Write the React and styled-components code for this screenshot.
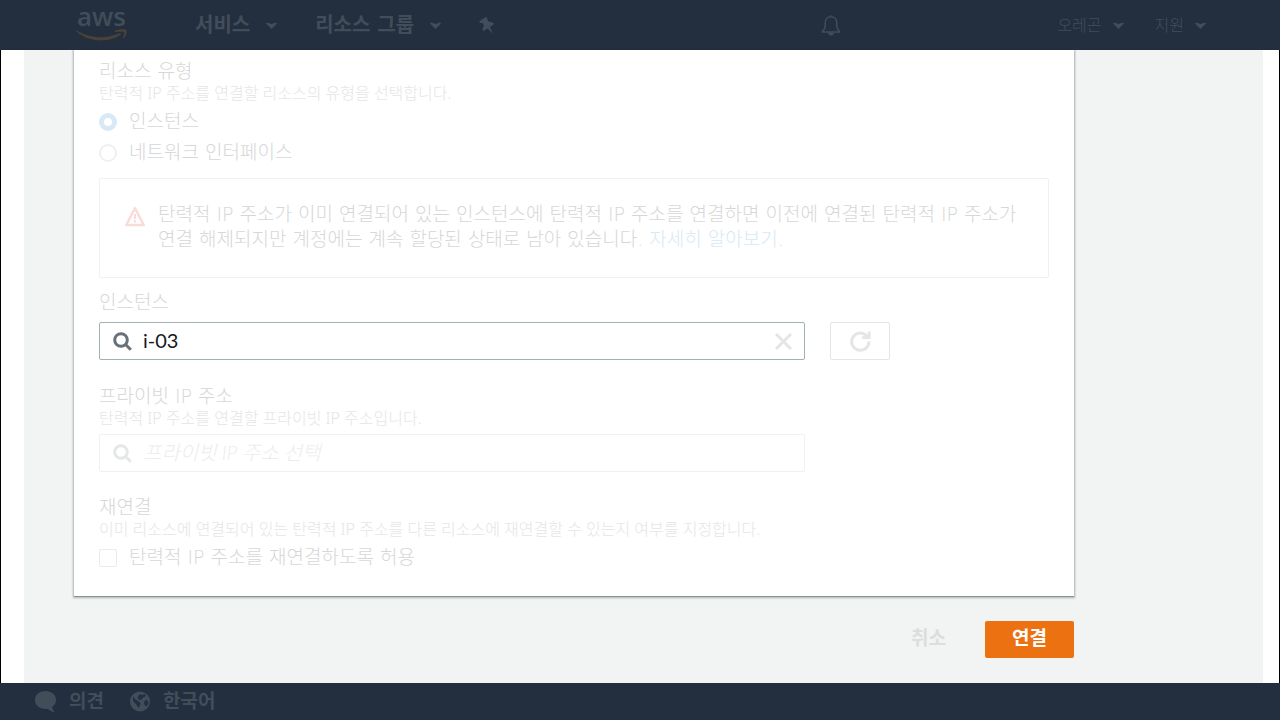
import React, { useState } from 'react';
import styled, { createGlobalStyle, ThemeProvider } from 'styled-components';

const theme = {
  color_nav: '#232f3e',
  color_nav_text: '#424d5a',
  color_page: '#f2f3f3',
  color_text: '#d6d7d8',
  color_hint: '#e4e6e6',
  color_border: '#eff0f0',
  color_link: '#d6e9f4',
  color_warning: '#f9dcd8',
  color_primary: '#ec7211',
  font_body: '"DejaVu Sans", "Noto Sans CJK KR", sans-serif',
  font_input: 'Lato, "Noto Sans CJK KR", sans-serif',
  font_hint: '"Noto Sans", "Noto Sans CJK KR", sans-serif',
};

const GlobalStyle = createGlobalStyle`
  *, *::before, *::after {
    box-sizing: border-box;
  }

  body {
    margin: 0;
    background-color: #ffffff;
    font-family: ${props => props.theme.font_body};
    font-size: 19px;
    font-weight: 300;
    line-height: 25px;
    color: ${props => props.theme.color_text};
  }

  button, input {
    margin: 0;
    font: inherit;
    color: inherit;
  }

  svg {
    display: block;
    flex: none;
  }
`;

const Page = styled.div`
  min-height: 100vh;
  display: flex;
  flex-direction: column;
`;

/* header */

const Header = styled.header`
  height: 50px;
  padding: 0 74px 0 76px;
  display: flex;
  align-items: center;
  background-color: ${props => props.theme.color_nav};
  color: ${props => props.theme.color_nav_text};
`;

const Logo = styled.a`
  width: 51px;
  margin-right: 68px;
  padding-bottom: 6px;
  display: flex;
  flex-direction: column;
  align-items: center;
  color: inherit;
  text-decoration: none;
`;

const LogoName = styled.span`
  font-family: "Open Sans", sans-serif;
  font-size: 26px;
  font-weight: 600;
  line-height: 26px;
`;

const Nav = styled.nav`
  flex: 1;
  display: flex;
  align-items: center;
  gap: 38px;
`;

const NavRight = styled(Nav)`
  flex: none;
  gap: 31px;
`;

const MenuButton = styled.button`
  padding: 0;
  border: 0;
  background: none;
  display: flex;
  align-items: center;
  gap: ${props => (props.$small ? 11 : 16)}px;
  font-size: ${props => (props.$small ? 16 : 20)}px;
  font-weight: ${props => (props.$small ? 300 : 700)};
`;

const IconButton = styled.button`
  padding: 0;
  border: 0;
  background: none;
  display: flex;
`;

const BellButton = styled(IconButton)`
  margin-right: 185px;
`;

/* form */

const Body = styled.div`
  flex: 1;
  padding: 0 16px 0 23px;
  display: flex;
  border: solid #000000;
  border-width: 0 1px;
`;

const Main = styled.main`
  flex: 1;
  padding: 0 50px 25px;
  background-color: ${props => props.theme.color_page};
`;

const Form = styled.form`
  max-width: 1000px;
`;

const Card = styled.div`
  padding: 9px 25px 26px;
  background-color: #ffffff;
  box-shadow: 0 1px 0 #879596, 0 1px 2px 1px rgba(0, 28, 36, 0.3);
  clip-path: inset(0 -4px -4px -4px);
`;

const Field = styled.div`
  margin-bottom: ${props => props.$space || 0}px;
`;

const Label = styled.label`
  display: block;
  line-height: 24px;
`;

const Hint = styled.p`
  margin: 0;
  font-family: ${props => props.theme.font_hint};
  font-size: 16px;
  line-height: 20px;
  color: ${props => props.theme.color_hint};
`;

const Choice = styled.label`
  margin-top: 6px;
  display: flex;
  align-items: center;
  gap: 12px;
`;

const Radio = styled.input`
  appearance: none;
  width: 18px;
  height: 18px;
  border: 2px solid ${props => props.theme.color_border};
  border-radius: 50%;
  background-color: #ffffff;

  &:checked {
    border: 5px solid ${props => props.theme.color_link};
  }
`;

const Checkbox = styled.input`
  appearance: none;
  width: 18px;
  height: 18px;
  border: 1px solid #e9eaea;
  border-radius: 2px;
  background-color: #ffffff;
`;

const Alert = styled.div`
  margin: 13px 0 12px;
  padding: 23px 25px 25px;
  display: flex;
  gap: 13px;
  border: 1px solid ${props => props.theme.color_border};
  border-radius: 2px;

  & > svg {
    margin-top: 4px;
  }
`;

const AlertText = styled.p`
  margin: 0;
`;

const Link = styled.a`
  color: ${props => props.theme.color_link};
  text-decoration: none;
`;

const SearchRow = styled.div`
  margin-top: ${props => props.$top}px;
  display: flex;
  gap: 25px;
`;

const SearchBox = styled.div`
  flex: 0 1 706px;
  height: 38px;
  padding: 0 12px 0 13px;
  display: flex;
  align-items: center;
  gap: 11px;
  border: 1px solid ${props => (props.$active ? '#a2b2b3' : props.theme.color_border)};
  border-radius: 2px;
  background-color: #ffffff;
  color: ${props => (props.$active ? '#687078' : '#e4e6e7')};
`;

const SearchInput = styled.input`
  flex: 1;
  min-width: 0;
  padding: 0 0 2px;
  border: 0;
  outline: 0;
  background: none;
  color: #16191f;
  font-family: ${props => props.theme.font_input};
  font-size: 20px;
  font-weight: 400;

  &::placeholder {
    color: #eceded;
    font-style: italic;
    font-weight: 300;
    opacity: 1;
  }
`;

const ClearButton = styled(IconButton)`
  color: #e4e5e6;
`;

const RefreshButton = styled.button`
  width: 60px;
  padding: 0;
  display: flex;
  align-items: center;
  justify-content: center;
  border: 1px solid #e4e5e6;
  border-radius: 2px;
  background-color: #ffffff;
  color: #e4e5e6;
`;

const Actions = styled.div`
  margin-top: 25px;
  display: flex;
  justify-content: flex-end;
  gap: 12px;
`;

const ActionButton = styled.button`
  height: 37px;
  padding: 0 27px 3px;
  border: 0;
  border-radius: 2px;
  background-color: ${props => (props.$primary ? props.theme.color_primary : 'transparent')};
  color: ${props => (props.$primary ? '#ffffff' : '#dcdddd')};
  font-weight: 700;
`;

/* footer */

const Footer = styled.footer`
  height: 37px;
  padding: 0 35px;
  display: flex;
  align-items: center;
  gap: 26px;
  background-color: ${props => props.theme.color_nav};
  color: ${props => props.theme.color_nav_text};
`;

const FooterButton = styled.button`
  padding: 0;
  border: 0;
  background: none;
  display: flex;
  align-items: center;
  gap: 13px;
  font-weight: 700;
`;

/* icons */

const IconSmile = () => (
  <svg width="51" height="12" viewBox="0 0 51 12" fill="#4a4238">
    <path d="M.4 1.2C8 5.900 16 8.200 25 8.200c7 0 13-1.500 18.500-3.900 1.200-.5 2 .7 1 1.500C39.500 9.500 32 11.500 25 11.500 15.500 11.500 6.500 8 .2 2c-.5-.5-.3-1.100.2-.8z" />
    <path d="M39 1.800C42 .2 48.500-.3 50.200.8c1 .8.300 6.200-2.700 8.700-.5.4-.9.2-.7-.3.700-1.700 2-5.200 1.400-6-.7-.8-4.700-.5-8.500-.3-.8 0-1.300-.6-.7-1.100z" />
  </svg>
);

const IconChevron = () => (
  <svg width="11" height="7" viewBox="0 0 11 7" fill="currentColor">
    <path d="M1.200.4 5.500 2 9.800.4 11 1.600 5.500 7 0 1.600z" />
  </svg>
);

const IconPin = () => (
  <svg width="16" height="17" viewBox="0 0 16 17" fill="currentColor">
    <path d="M5.200 1C6.700-.3 8.800.2 8.200 2l1.600 2.800c2.200-.2 4.100.5 5.200 2.200l-3.900 3.100 2.800 6.600-5.200-5.300-4.500 2.900c-.9-2.100-.4-4.200 1-5.600L3.500 6C1.800 6.400.3 5.500.3 4.200z" />
  </svg>
);

const IconBell = () => (
  <svg width="20" height="21" viewBox="0 0 20 21" fill="none" stroke="currentColor" strokeWidth="1.500">
    <path d="M10 .2v1.600M10 1.800C6.300 1.800 4.200 4.500 4.200 8v3.500c0 2-1.500 3.200-3 5.500h17.600c-1.500-2.300-3-3.500-3-5.500V8c0-3.500-2.100-6.200-5.800-6.200z" strokeLinejoin="round" />
    <path d="M7 17.500a3 3 0 0 0 6 0z" fill="currentColor" stroke="none" />
  </svg>
);

const IconWarning = () => (
  <svg width="20" height="21" viewBox="0 0 20 21" fill="none" stroke={theme.color_warning} strokeWidth="2.500">
    <path d="M10 2 18.700 19H1.300z" strokeLinejoin="round" />
    <path d="M10 8v5M10 14.300v2.200" strokeWidth="2.200" />
  </svg>
);

const IconSearch = () => (
  <svg width="19" height="19" viewBox="0 0 19 19" fill="none" stroke="currentColor" strokeWidth="3">
    <circle cx="8" cy="8" r="6.300" />
    <path d="m12.300 12.300 5.500 5.500" />
  </svg>
);

const IconClose = () => (
  <svg width="17" height="17" viewBox="0 0 17 17" fill="none" stroke="currentColor" strokeWidth="3">
    <path d="m1 1 15 15M16 1 1 16" />
  </svg>
);

const IconRefresh = () => (
  <svg width="21" height="21" viewBox="0 0 21 21" fill="none" stroke="currentColor" strokeWidth="3">
    <path d="M18.900 10.600A8.600 8.600 0 1 1 16.400 4.600l2 2" />
    <path d="M19.200.5v6.200h-7" strokeWidth="2.800" />
  </svg>
);

const IconSpeech = () => (
  <svg width="21" height="21" viewBox="0 0 21 21" fill="currentColor">
    <path d="M10.500 0C16.300 0 21 3.700 21 9c0 2.900-1.500 5.300-3.800 6.900 0 1.800.8 3.400 2.600 5.100-3 0-5.400-1.200-7-3.200-.8.200-1.500.2-2.300.2C4.700 18 0 14.300 0 9s4.700-9 10.500-9z" />
  </svg>
);

const IconGlobe = () => (
  <svg width="20" height="21" viewBox="0 0 20 21">
    <circle cx="10" cy="10.500" r="10" fill="currentColor" />
    <path d="M9 3.500 12 4l3-1 1 2-3 1.500-1 2-2.500.5L7.500 7z" fill="#232f3e" />
    <path d="M3 5.500 5 8l3 2 2.500 2-.5 2.500-1.500 2.500-1.500-2.500-2-2.500-2-2z" fill="#232f3e" />
    <path d="m14.500 10 2-1.500 2 2-.5 3-2 2-2-2.500z" fill="#232f3e" />
  </svg>
);

const App = () => {
  const [resourceType, setResourceType] = useState('instance');
  const [instance, setInstance] = useState('i-03');
  const [address, setAddress] = useState('');
  const [reassociate, setReassociate] = useState(false);

  return (
    <ThemeProvider theme={theme}>
      <GlobalStyle />
      <Page>
        <Header>
          <Logo href="#">
            <LogoName>aws</LogoName>
            <IconSmile />
          </Logo>
          <Nav>
            <MenuButton>서비스 <IconChevron /></MenuButton>
            <MenuButton>리소스 그룹 <IconChevron /></MenuButton>
            <IconButton aria-label="바로 가기 고정"><IconPin /></IconButton>
          </Nav>
          <NavRight>
            <BellButton aria-label="알림"><IconBell /></BellButton>
            <MenuButton $small>오레곤 <IconChevron /></MenuButton>
            <MenuButton $small>지원 <IconChevron /></MenuButton>
          </NavRight>
        </Header>

        <Body>
          <Main>
            <Form onSubmit={e => e.preventDefault()}>
              <Card>
                <Field role="radiogroup" aria-labelledby="type-label">
                  <Label as="div" id="type-label">리소스 유형</Label>
                  <Hint>탄력적 IP 주소를 연결할 리소스의 유형을 선택합니다.</Hint>
                  <Choice>
                    <Radio
                      type="radio"
                      name="type"
                      checked={resourceType === 'instance'}
                      onChange={() => setResourceType('instance')}
                    />
                    인스턴스
                  </Choice>
                  <Choice>
                    <Radio
                      type="radio"
                      name="type"
                      checked={resourceType === 'interface'}
                      onChange={() => setResourceType('interface')}
                    />
                    네트워크 인터페이스
                  </Choice>
                </Field>

                <Alert>
                  <IconWarning />
                  <AlertText>
                    탄력적 IP 주소가 이미 연결되어 있는 인스턴스에 탄력적 IP 주소를 연결하면 이전에 연결된 탄력적 IP 주소가
                    연결 해제되지만 계정에는 계속 할당된 상태로 남아 있습니다. <Link href="#">자세히 알아보기</Link>.
                  </AlertText>
                </Alert>

                <Field $space={24}>
                  <Label htmlFor="instance">인스턴스</Label>
                  <SearchRow $top={8}>
                    <SearchBox $active>
                      <IconSearch />
                      <SearchInput id="instance" value={instance} onChange={e => setInstance(e.target.value)} />
                      <ClearButton type="button" aria-label="지우기" onClick={() => setInstance('')}>
                        <IconClose />
                      </ClearButton>
                    </SearchBox>
                    <RefreshButton type="button" aria-label="새로 고침"><IconRefresh /></RefreshButton>
                  </SearchRow>
                </Field>

                <Field $space={23}>
                  <Label htmlFor="address">프라이빗 IP 주소</Label>
                  <Hint>탄력적 IP 주소를 연결할 프라이빗 IP 주소입니다.</Hint>
                  <SearchRow $top={6}>
                    <SearchBox>
                      <IconSearch />
                      <SearchInput
                        id="address"
                        placeholder="프라이빗 IP 주소 선택"
                        value={address}
                        onChange={e => setAddress(e.target.value)}
                      />
                    </SearchBox>
                  </SearchRow>
                </Field>

                <Field>
                  <Label as="div">재연결</Label>
                  <Hint>이미 리소스에 연결되어 있는 탄력적 IP 주소를 다른 리소스에 재연결할 수 있는지 여부를 지정합니다.</Hint>
                  <Choice>
                    <Checkbox
                      type="checkbox"
                      checked={reassociate}
                      onChange={e => setReassociate(e.target.checked)}
                    />
                    탄력적 IP 주소를 재연결하도록 허용
                  </Choice>
                </Field>
              </Card>

              <Actions>
                <ActionButton type="button">취소</ActionButton>
                <ActionButton $primary>연결</ActionButton>
              </Actions>
            </Form>
          </Main>
        </Body>

        <Footer>
          <FooterButton><IconSpeech />의견</FooterButton>
          <FooterButton><IconGlobe />한국어</FooterButton>
        </Footer>
      </Page>
    </ThemeProvider>
  );
};

export default App;
